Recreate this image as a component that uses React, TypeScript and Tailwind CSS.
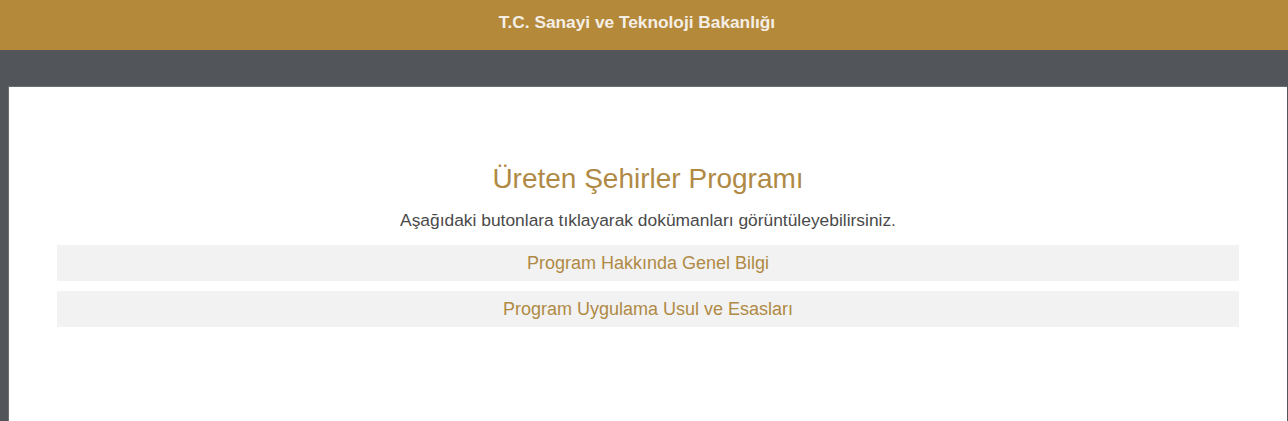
export default function App() {
  const docs = ['Program Hakkında Genel Bilgi', 'Program Uygulama Usul ve Esasları'];

  return (
    <div className="h-[421px] w-[1288px] overflow-hidden bg-[#52565a] font-['Liberation_Sans',Arial,sans-serif]">
      <header className="flex h-[50px] items-center justify-center bg-[#b5893a] pb-[5px] pr-[14px]">
        <span className="text-[17.3px] font-bold text-[#f4efe6]">T.C. Sanayi ve Teknoloji Bakanlığı</span>
      </header>

      <main className="ml-[8px] mr-[1px] mt-[36px] h-[340px] border-l border-t border-[#6b6e71] bg-white px-[48px] pt-[76px]">
        <h1 className="text-center text-[28px] leading-[32px] text-[#b08a45]">Üreten Şehirler Programı</h1>
        <p className="mt-[14px] text-center text-[17.4px] leading-[22px] text-[#4a4a4a]">
          Aşağıdaki butonlara tıklayarak dokümanları görüntüleyebilirsiniz.
        </p>
        <div className="mt-[14px] flex flex-col gap-[10px]">
          {docs.map(d => (
            <div key={d} className="flex h-[36px] items-center justify-center bg-[#f2f2f2] text-[18px] text-[#b08a45]">
              {d}
            </div>
          ))}
        </div>
      </main>
    </div>
  );
}
